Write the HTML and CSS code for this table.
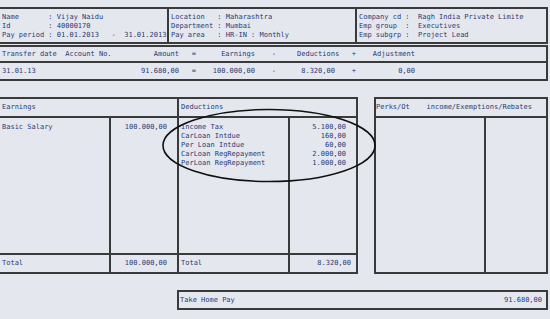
FILE: index.html
```html
<!DOCTYPE html>
<html>
<head>
<meta charset="utf-8">
<link rel="stylesheet" href="styles.css">
</head>
<body>
<div class="sheet">
  <div class="box head">
    <pre class="hcell">Name       : Vijay Naidu
Id         : 40000170
Pay period : 01.01.2013   -  31.01.2013</pre>
    <pre class="hcell sep">Location   : Maharashtra
Department : Mumbai
Pay area   : HR-IN : Monthly</pre>
    <pre class="hcell sep">Company cd :  Ragh India Private Limite
Emp group  :  Executives
Emp subgrp :  Project Lead</pre>
  </div>

  <div class="box transfer">
    <pre class="trow th">Transfer date  Account No.          Amount   =      Earnings    -     Deductions   +    Adjustment</pre>
    <pre class="trow td">31.01.13                         91.680,00   =    100.000,00    -      8.320,00    +          0,00</pre>
  </div>

  <div class="lower">
    <div class="box ed">
      <div class="cell hdr span2">Earnings</div>
      <div class="cell hdr span2 vl">Deductions</div>

      <pre class="cell body">Basic Salary</pre>
      <pre class="cell body vl num">100.000,00</pre>
      <pre class="cell body vl">Income Tax
CarLoan Intdue
Per Loan Intdue
CarLoan RegRepayment
PerLoan RegRepayment</pre>
      <pre class="cell body vl num">5.100,00
160,00
60,00
2.000,00
1.000,00</pre>

      <div class="cell tot">Total</div>
      <div class="cell tot vl num">100.000,00</div>
      <div class="cell tot vl">Total</div>
      <div class="cell tot vl num num-tight">8.320,00</div>
    </div>

    <div class="box perks">
      <pre class="cell hdr span2 pk">Perks/Ot    income/Exemptions/Rebates</pre>
      <div class="cell pbody"></div>
      <div class="cell pbody vl"></div>
    </div>
  </div>

  <div class="box takehome">
    <span>Take Home Pay</span>
    <span>91.680,00</span>
  </div>

  <svg class="oval" width="550" height="319" viewBox="0 0 550 319">
    <ellipse cx="269" cy="145.5" rx="106" ry="36" fill="none" stroke="#111" stroke-width="1.6"/>
  </svg>
</div>
</body>
</html>
```

FILE: styles.css
```css
* { box-sizing: border-box; }

html, body {
  margin: 0;
  padding: 0;
  background: #e4e8ee;
}

body {
  width: 550px;
  height: 319px;
  overflow: hidden;
  font-family: "DejaVu Sans Mono", "Liberation Mono", monospace;
  font-size: 7px;
  color: #2a3878;
}

pre {
  margin: 0;
  font: inherit;
  white-space: pre;
}

.sheet {
  position: relative;
  padding-top: 7px;
  width: 550px;
  height: 319px;
}

.box {
  border: 2px solid #3a3a3a;
  border-left: none;
}

/* header box */
.head {
  width: 548px;
  height: 37px;
  display: grid;
  grid-template-columns: 167px 188px 1fr;
}
.hcell {
  padding: 4px 0 0 2px;
  line-height: 9px;
  overflow: hidden;
}
.sep { border-left: 2px solid #3a3a3a; }

/* transfer box */
.transfer {
  margin-top: 1px;
  width: 548px;
}
.trow {
  padding-left: 2px;
  overflow: hidden;
}
.th {
  height: 16px;
  line-height: 14px;
  border-bottom: 2px solid #3a3a3a;
}
.td {
  height: 16px;
  line-height: 16px;
}

/* lower area */
.lower {
  margin-top: 16px;
  display: flex;
  gap: 16px;
}

.ed {
  width: 358px;
  display: grid;
  grid-template-columns: 109px 68px 111px 68px;
  grid-template-rows: 19px 137px 17px;
}

.cell {
  overflow: hidden;
}
.span2 { grid-column: span 2; }
.vl { border-left: 2px solid #3a3a3a; }

.hdr {
  line-height: 17px;
  border-bottom: 2px solid #3a3a3a;
  padding-left: 2px;
}
.body {
  padding: 5px 0 0 2px;
  line-height: 9px;
  border-bottom: 2px solid #3a3a3a;
}
.tot {
  line-height: 17px;
  padding-left: 2px;
}
.num {
  text-align: right;
  padding-right: 10px;
}
.num-tight { padding-right: 5px; }

.perks {
  width: 174px;
  border-left: 2px solid #3a3a3a;
  display: grid;
  grid-template-columns: 108px 62px;
  grid-template-rows: 19px 154px;
}
.pk { padding-left: 0; }

/* take home */
.takehome {
  margin: 16px 0 0 177px;
  width: 371px;
  height: 20px;
  border-left: 2px solid #3a3a3a;
  display: flex;
  justify-content: space-between;
  align-items: center;
  padding: 0 4px 0 1px;
  line-height: 16px;
}

.oval {
  position: absolute;
  left: 0;
  top: 0;
  pointer-events: none;
}
```
